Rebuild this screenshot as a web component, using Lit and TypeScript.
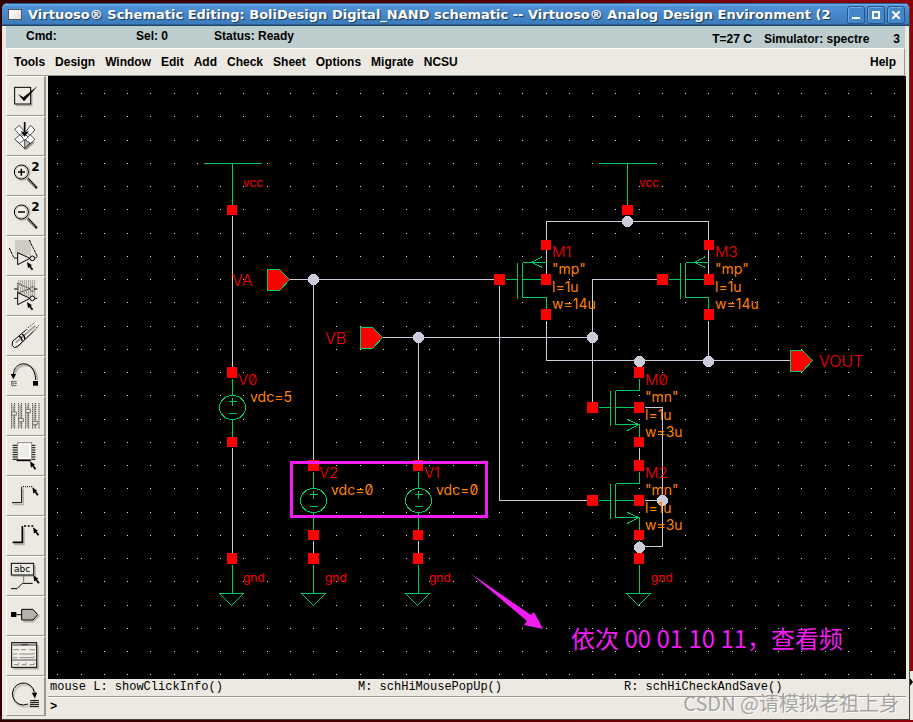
import { LitElement, html, svg, css } from "lit";
import { customElement } from "lit/decorators.js";

/* Icons are drawn on a 117 x 120 board, three units to a pixel. */
const cursor = (x: number, y: number) =>
  svg`<path fill="#000" transform="translate(${x} ${y})" d="M0 0L15 10L11 12L19 22L14 25L7 15L3 19Z"/>`;

const lens = (sign: unknown) => svg`
  <path d="M84 70L112 98" stroke="#b5b2ab" stroke-width="9"/>
  <path d="M80 64L110 96" stroke="#000" stroke-width="6"/>
  <path d="M82 68L106 93" stroke="#fff" stroke-width="2"/>
  <circle cx="67" cy="50" r="22" fill="none" stroke="#b5b2ab" stroke-width="5"/>
  <circle cx="64" cy="48" r="21" fill="#f4f2ec" stroke="#000" stroke-width="3"/>
  <circle cx="64" cy="48" r="17" fill="none" stroke="#c6c3bc" stroke-width="3"/>
  ${sign}
  <text x="94" y="44" font-size="36" font-weight="700">2</text>`;

const range = (n: number) => Array.from({ length: n }, (_, i) => i);

const icons: { name: string; art: unknown }[] = [
  { name: "Check and save", art: svg`
    <path d="M48 88H95V40" fill="none" stroke="#b5b2ab" stroke-width="5"/>
    <rect x="44" y="34" width="48" height="50" fill="none" stroke="#000" stroke-width="3"/>
    <path d="M54 54L70 64L113 30L72 76Z"/>` },
  { name: "Save", art: svg`
    <path d="M52 78L78 103L104 80L84 70Z" fill="#9a978f"/>
    <g fill="#fff" stroke="#000" stroke-width="2">
      <path d="M50 74L74 98L98 74L74 54Z"/><path d="M74 98V72L98 72Z" fill="#c2bfb7"/>
      <path d="M44 40L58 28L73 46L60 58Z"/><path d="M78 46L92 28L105 42L90 58Z"/>
      <path d="M44 70L60 56L73 72L58 82Z"/><path d="M76 72L90 56L105 70L92 82Z"/>
    </g>
    <path d="M74 18V50" stroke="#000" stroke-width="5"/><path d="M61 44L74 62L87 44L74 50Z"/>` },
  { name: "Zoom in by 2", art: lens(svg`<path d="M54 48H75M64 38V59" stroke="#000" stroke-width="5"/>`) },
  { name: "Zoom out by 2", art: lens(svg`<path d="M54 48H75" stroke="#000" stroke-width="5"/>`) },
  { name: "Stretch", art: svg`
    <g stroke="#b0ada6" stroke-width="3">${range(8).map((i) => svg`<path d="M${48 + i * 6} 12V${56 + (i % 2) * 4}"/>`)}</g>
    <path d="M28 36L42 66H53M88 12L112 62L106 66" fill="none" stroke="#000" stroke-width="3" stroke-dasharray="9 2"/>
    <path d="M53 50V86L90 67Z" fill="#ece9e2" stroke="#000" stroke-width="3"/>
    <circle cx="97" cy="67" r="7" fill="#ece9e2" stroke="#000" stroke-width="3"/>${cursor(81, 78)}` },
  { name: "Copy", art: svg`
    <g stroke="#a5a29b" stroke-width="3">${range(9).map((i) => svg`<path d="M${56 + i * 6} 12V62"/>`)}</g>
    <path d="M53 22V52L90 38Z" fill="none" stroke="#000" stroke-width="3" stroke-dasharray="3 3"/>
    <circle cx="97" cy="39" r="7" fill="none" stroke="#000" stroke-width="3" stroke-dasharray="3 3"/>
    <path d="M42 39H53M42 67H53M105 39H112M105 67H112" stroke="#000" stroke-width="3"/>
    <path d="M53 50V86L90 67Z" fill="#ece9e2" stroke="#000" stroke-width="3"/>
    <circle cx="97" cy="67" r="7" fill="#ece9e2" stroke="#000" stroke-width="3"/>${cursor(81, 78)}` },
  { name: "Delete", art: svg`
    <path d="M50 98L116 34L104 34L44 92Z" fill="#b5b2ab"/>
    <path d="M36 86L38 76L98 24L110 20L116 26L108 38L54 90L44 95Z" fill="#f4f2ec"/>
    <path d="M80 40L38 76L36 88L44 95L54 90L100 46" fill="none" stroke="#000" stroke-width="3"/>
    <path d="M47 80L106 29" stroke="#a5a29b" stroke-width="6"/>
    <path d="M57 62Q66 62 66 76M65 55Q74 56 74 69" fill="none" stroke="#000" stroke-width="4"/>
    <path d="M100 46L116 28M84 36L104 20" stroke="#000" stroke-width="3" stroke-dasharray="3 4"/>` },
  { name: "Undo", art: svg`
    <path d="M45 58C47 18 110 12 112 74" fill="none" stroke="#b5b2ab" stroke-width="6"/>
    <path d="M40 56C42 12 105 8 107 72" fill="none" stroke="#000" stroke-width="3"/>
    <path d="M32 54H48L40 70Z"/><rect x="99" y="75" width="15" height="14"/>
    <rect x="35" y="76" width="13" height="13" fill="none" stroke="#000" stroke-width="3" stroke-dasharray="3 3"/>
    <path d="M41 78V88M37 82H46" stroke="#000" stroke-width="2" stroke-dasharray="2 2"/>` },
  { name: "Properties", art: svg`
    <g stroke="#000" stroke-width="3" stroke-dasharray="3 3">${[35, 44, 56, 65, 77, 86, 98, 107, 117].map((x) => svg`<path d="M${x} 22V98"/>`)}</g>
    <g stroke="#aaa79f" stroke-width="4">${[40, 61, 82, 103].map((x) => svg`<path d="M${x} 26V94"/>`)}</g>
    <g fill="#f4f2ec" stroke="#77746d" stroke-width="3">
      <rect x="35" y="48" width="14" height="9"/><rect x="56" y="68" width="14" height="9"/>
      <rect x="77" y="40" width="14" height="9"/><rect x="98" y="76" width="14" height="9"/>
    </g>` },
  { name: "Instance", art: svg`
    <g stroke="#000" stroke-width="3">${range(7).map((i) => svg`<path d="M38 ${28 + i * 7}H106"/>`)}</g>
    <rect x="53" y="20" width="42" height="52" fill="#fff" stroke="#8c8982" stroke-width="3"/>
    <rect x="60" y="27" width="28" height="38" fill="#efede7"/>
    <path d="M50 73H92" stroke="#000" stroke-width="5"/>${cursor(90, 76)}` },
  { name: "Wire (narrow)", art: svg`
    <path d="M40 86H70V38" fill="none" stroke="#b5b2ab" stroke-width="4"/>
    <path d="M36 80H65V32" fill="none" stroke="#000" stroke-width="3"/>
    <path d="M69 32H100" stroke="#000" stroke-width="3" stroke-dasharray="3 3"/>${cursor(97, 34)}` },
  { name: "Wire (wide)", art: svg`
    <path d="M42 85H72V38" fill="none" stroke="#b5b2ab" stroke-width="5"/>
    <path d="M38 79H67V30" fill="none" stroke="#000" stroke-width="5"/>
    <path d="M72 30H102" stroke="#000" stroke-width="5" stroke-dasharray="6 5"/>${cursor(99, 34)}` },
  { name: "Wire name", art: svg`
    <path d="M38 60H105V28" fill="none" stroke="#b5b2ab" stroke-width="5"/>
    <rect x="34" y="22" width="67" height="35" fill="#ece9e2" stroke="#000" stroke-width="3"/>
    <text x="42" y="48" font-size="27">abc</text>
    <path d="M33 98H51L67 82H98" fill="none" stroke="#000" stroke-width="3"/>
    <path d="M71 62V80" stroke="#000" stroke-width="3" stroke-dasharray="3 3"/>${cursor(100, 58)}` },
  { name: "Pin", art: svg`
    <path d="M70 77H100L118 58" fill="none" stroke="#b5b2ab" stroke-width="5"/>
    <rect x="33" y="48" width="16" height="15"/><path d="M49 56H65" stroke="#000" stroke-width="3"/>
    <path d="M65 40H99L113 56L99 72H65Z" fill="#b5b2ab" stroke="#000" stroke-width="3"/>` },
  { name: "Command options", art: svg`
    <path d="M40 98H114V26" fill="none" stroke="#b5b2ab" stroke-width="5"/>
    <rect x="35" y="20" width="75" height="74" fill="#f1efe9" stroke="#000" stroke-width="3"/>
    <rect x="37" y="22" width="71" height="8" fill="#96938c"/>
    <path d="M64 26H84M37 72H108" stroke="#000" stroke-width="2"/>
    <g fill="none" stroke="#8c8982" stroke-width="3">
      <path d="M41 41H57M63 41H78M88 41H105M39 54H52M58 54H102V50M39 65H52M58 65H102V61"/>
      <path d="M42 86H56V80M65 86H78V80M88 86H102V80"/>
    </g>` },
  { name: "Repeat", art: svg`
    <circle cx="74" cy="60" r="33" fill="none" stroke="#c6c3bc" stroke-width="5"/>
    <path d="M103 50A33 33 0 1 0 84 84" fill="none" stroke="#000" stroke-width="3"/>
    <path d="M95 50H112L104 66Z"/>
    <path d="M90 74H117M90 80H117M90 86H117M90 92H117" stroke="#000" stroke-width="3"/>` },
];

/* Grid dots of the sheet, one every 23.25 units, snapped to a pixel. */
const dots = range(56 * 90)
  .map((i) => `M${Math.floor(57.75 + (i % 90) * 23.25)} ${Math.floor(93.5 + Math.floor(i / 90) * 23.25)}h1v1h-1z`)
  .join("");

const pads = [
  [227, 205, 10, 10], [227, 367, 10, 11], [227, 437, 10, 10], [227, 553, 10, 11],
  [308, 460, 11, 11], [308, 530, 11, 10], [308, 553, 11, 11],
  [413, 460, 10, 11], [413, 530, 10, 10], [413, 553, 10, 11],
  [622, 205, 11, 10], [541, 240, 10, 10], [541, 274, 10, 11], [541, 309, 10, 11], [494, 274, 11, 11],
  [704, 240, 10, 10], [704, 274, 10, 11], [704, 309, 10, 11], [657, 274, 11, 11],
  [634, 367, 10, 11], [634, 402, 10, 11], [634, 437, 10, 10], [587, 402, 11, 11],
  [634, 460, 10, 11], [634, 495, 10, 11], [634, 530, 10, 10], [587, 495, 11, 11], [634, 553, 10, 11],
];
const joints = [[313, 279], [418, 337], [627, 221], [592, 337], [639, 361], [708, 361], [662, 500], [639, 547]];
const wires =
  "M232 215V367M232 447V553M289 279H494M313 279V460M313 540V553M382 337H592M418 337V460M418 540V553" +
  "M627 215V221M546 274V221H708V274M546 320V360H790M708 320V360M657 279H592V402M499 285V500H587" +
  "M639 360V367M639 447V460M639 540V553M644 407H662V546H639M644 500H662";

const supply = (x: number) => `M${x - 29} 163H${x + 29}M${x} 163V205`;
const ground = (x: number, tip: number) => `M${x} 564V593M${tip - 12} 593H${tip + 12}L${tip} 605Z`;
const source = (x: number, y: number) =>
  `M${x} ${y - 29}V${y - 12}M${x} ${y + 12}V${y + 30}M${x - 4} ${y - 6}H${x + 4}M${x} ${y - 10}V${y - 2}M${x - 4} ${y + 6}H${x + 4}`;
const pmos = (g: number, d: number) =>
  `M${g - 12} 279H${g}M${g} 262V298M${g + 5} 262V297M${g + 5} 262H${d}M${g + 5} 279H${d}M${g + 5} 297H${d}V309M${g + 25} 256L${g + 14} 262L${g + 25} 267`;
const nmos = (y: number) =>
  `M598 ${y}H610M610 ${y - 17}V${y + 18}M615 ${y - 17}V${y + 17}M639 ${y - 29}V${y - 17}H615M615 ${y}H634M615 ${y + 17}H639V${y + 30}M627 ${y + 12}L638 ${y + 17}L627 ${y + 23}`;
const symbols = [
  supply(232), supply(627), ground(232, 231), ground(313, 313), ground(418, 417), ground(639, 638),
  source(232, 407), source(313, 500), source(418, 500), pmos(517, 546), pmos(680, 708), nmos(407), nmos(500),
].join("");
const port = (x: number, y: number) => `M${x} ${y - 10}H${x + 12}L${x + 22} ${y}L${x + 12} ${y + 11}H${x}Z`;

type Label = [string, number, number, string];
const device = (name: string, model: string, w: string, x: number, y: number): Label[] => [
  [name, x, y, "net mid"], [model, x, y + 17, "val"], ["l=1u", x, y + 35, "val"], [w, x, y + 52, "val"],
];
const labels: Label[] = [
  ["vcc", 243, 187, "net small"], ["vcc", 639, 187, "net small"],
  ["gnd", 243, 582, "net small"], ["gnd", 325, 582, "net small"], ["gnd", 429, 582, "net small"], ["gnd", 651, 582, "net small"],
  ["VA", 232, 286, "net big"], ["VB", 325, 344, "net big"], ["VOUT", 819, 367, "net big"],
  ["V0", 238, 385, "net mid"], ["V2", 319, 478, "net mid"], ["V1", 424, 478, "net mid"],
  ["vdc=5", 250, 402, "val"], ["vdc=0", 331, 495, "val"], ["vdc=0", 436, 495, "val"],
  ...device("M1", '"mp"', "w=14u", 552, 257), ...device("M3", '"mp"', "w=14u", 715, 257),
  ...device("M0", '"mn"', "w=3u", 645, 385), ...device("M2", '"mn"', "w=3u", 645, 478),
];

@customElement("schematic-canvas")
export class SchematicCanvas extends LitElement {
  static styles = css`
    :host { display: block; background: #000; overflow: hidden; position: relative; min-height: 400px; }
    .sheet { position: absolute; inset: 0; width: 100%; height: 100%; }
    .crisp { shape-rendering: crispEdges; }
    .dots { fill: #d6d6e4; }
    .wire { fill: none; stroke: #ccccda; }
    .joint { fill: #ccccda; }
    .symbol { fill: none; stroke: #00cc66; }
    .port { fill: #f00; stroke: #00cc66; }
    .pad { fill: #f00; }
    .mark { fill: none; stroke: #f31cf3; stroke-width: 3px; }
    .arrow { fill: #f31cf3; }
    .label { font-family: Inter, "Liberation Sans", sans-serif; font-weight: 400; font-feature-settings: "zero" 1; }
    .net { fill: #f00; }
    .val { fill: #ff8000; font-size: 14px; }
    .small { font-size: 12px; }
    .mid { font-size: 15px; font-weight: 300; }
    .big { font-size: 16px; font-weight: 300; }
    .note { fill: #f31cf3; font: 24px "Noto Sans CJK SC", sans-serif; }
  `;
  render() {
    return html`<svg class="sheet" role="img" aria-label="NAND gate schematic">
      <g transform="translate(-48 -76)"><path class="dots crisp" d=${dots} /></g>
      <g transform="translate(-47.5 -75.5)">
        <path class="wire crisp" d=${wires} />
        ${joints.map(([x, y]) => svg`<circle class="joint crisp" cx=${x} cy=${y} r="5.5"/>`)}
        <path class="symbol crisp" d=${symbols} />
        ${[[232, 407], [313, 500], [418, 500]].map(([x, y]) => svg`<ellipse class="symbol crisp" cx=${x} cy=${y} rx="13" ry="12"/>`)}
        ${[[267, 279], [360, 337], [790, 360]].map(([x, y]) => svg`<path class="port crisp" d=${port(x, y)} />`)}
      </g>
      <g transform="translate(-48 -76)">
        ${pads.map(([x, y, w, h]) => svg`<rect class="pad" x=${x} y=${y} width=${w} height=${h} />`)}
        ${labels.map(([t, x, y, c]) => svg`<text class="label ${c}" x=${x} y=${y}>${t}</text>`)}
        <path class="arrow" d="M470 573L531 615L534 612L543 629L524 625L527 621Z" />
        <text class="note" x="571" y="648">依次 00 01 10 11，查看频</text>
      </g>
      <g transform="translate(-47.5 -75.5)"><rect class="mark" x="291" y="462" width="195" height="54" /></g>
    </svg>`;
  }
}

@customElement("app-root")
export class AppRoot extends LitElement {
  static styles = css`
    :host {
      display: grid; grid-template-columns: minmax(0, 1fr) 3px; box-sizing: border-box; min-height: 100vh;
      padding: 3px 0 2px 2px; position: relative; color: #000;
      font-family: "Liberation Sans", sans-serif; background: linear-gradient(90deg, #300000, #4a0000 45%, #900008);
    }
    button { font: inherit; color: inherit; padding: 0; border: 0; background: none; }
    .window {
      display: grid; grid-template-rows: 23px 22px 28px minmax(0, 1fr); min-width: 0; background: #ece9e2;
      border-right: 1px solid #4a4540; border-bottom: 1px solid #4a4540; border-radius: 6px 6px 0 0; overflow: hidden;
    }
    .title {
      display: flex; align-items: center; gap: 2px; padding: 0 4px 0 6px; min-width: 0;
      background: linear-gradient(#2c5d92 0 1px, #6aa9e6 1px 2px, #4f91d6 3px, #3c7cbc 21px, #1f4266 22px);
    }
    .sys { width: 14px; height: 11px; border: 1px solid #555; background: linear-gradient(135deg, #fff, #ddd); box-sizing: border-box; }
    .caption {
      flex: 1; margin: 0 0 0 4px; min-width: 0; overflow: hidden; white-space: nowrap; color: #fff;
      font: 700 13px/20px "DejaVu Sans", sans-serif; text-shadow: 1px 1px 1px #1c3550;
    }
    .ctl {
      width: 18px; height: 18px; border: 1px solid #24548a; border-radius: 3px; background: #4486c8;
      display: grid; place-items: center; box-shadow: inset 1px 1px 0 #6ea9e2;
    }
    .glyph { width: 10px; height: 10px; display: block; }
    .status {
      display: grid; grid-template-columns: 110px 78px 1fr auto auto auto; margin: 0 4px; padding: 0 5px 0 20px;
      background: #bdcccc; font: 700 12px/20px "Liberation Sans", sans-serif; white-space: nowrap;
    }
    .low { padding-top: 3px; }
    .temp { margin-right: 12px; }
    .sim { margin-right: 24px; }
    .menu {
      display: flex; gap: 10px; align-items: center; margin: 0 4px; border: 1px solid; box-sizing: border-box;
      border-color: #fff #9a978f #9a978f #fff; font: 700 12px/20px "Liberation Sans", sans-serif; padding: 0 8px 0 7px;
    }
    .help { margin-left: auto; }
    .work { display: grid; grid-template-columns: 40px minmax(0, 1fr); column-gap: 2px; padding: 0 3px 3px 4px; }
    .tools { display: grid; grid-auto-rows: 40px; align-content: start; }
    .tool { border: 1px solid; border-color: #fff #9a978f #9a978f #fff; border-right-width: 2px; display: block; overflow: hidden; }
    .icon { display: block; width: 39px; height: 40px; margin: -1px 0 0; font-family: "DejaVu Sans", sans-serif; }
    .main { display: grid; grid-template-rows: minmax(0, 1fr) 18px 19px; min-width: 0; }
    .mouse {
      display: grid; grid-template-columns: 308fr 266fr 282fr; padding-left: 2px; border-bottom: 1px solid #9a978f;
      font: 12px/17px "Liberation Mono", monospace; white-space: pre; box-sizing: border-box;
    }
    .prompt { display: flex; padding-left: 2px; border-top: 1px solid #fff; font: 700 12px/18px "Liberation Mono", monospace; box-sizing: border-box; }
    .entry { flex: 1; border: 0; outline: 0; background: none; font: inherit; min-width: 0; padding: 0 4px; }
    .behind { display: flex; flex-direction: column; justify-content: flex-end; }
    .sliver { height: 49px; background: #ece9e2; display: flex; align-items: flex-start; padding-top: 7px; box-sizing: border-box; }
    .nub { width: 3px; height: 8px; display: block; }
    .brand {
      position: absolute; right: 14px; bottom: 5px; font: 20px/28px "Noto Sans CJK SC", sans-serif;
      color: rgba(150, 150, 150, 0.85); text-shadow: 1px 1px 0 rgba(255, 255, 255, 0.7); white-space: nowrap;
    }
  `;
  render() {
    const menus = ["Tools", "Design", "Window", "Edit", "Add", "Check", "Sheet", "Options", "Migrate", "NCSU"];
    return html`
      <div class="window">
        <header class="title">
          <button class="sys" aria-label="Window menu"></button>
          <h1 class="caption">Virtuoso® Schematic Editing: BoliDesign Digital_NAND schematic -- Virtuoso® Analog Design Environment (2</h1>
          <button class="ctl" aria-label="Minimize"><svg class="glyph" viewBox="0 0 10 10"><path d="M1 8H9" stroke="#fff" stroke-width="2"/></svg></button>
          <button class="ctl" aria-label="Maximize"><svg class="glyph" viewBox="0 0 10 10"><path d="M2 2H8V8H2Z" fill="none" stroke="#fff" stroke-width="2"/></svg></button>
          <button class="ctl" aria-label="Close"><svg class="glyph" viewBox="0 0 10 10"><path d="M2 2L8 8M8 2L2 8" stroke="#fff" stroke-width="2" stroke-linecap="square"/></svg></button>
        </header>
        <div class="status">
          <span>Cmd:</span><span>Sel: 0</span><span>Status: Ready</span>
          <span class="low temp">T=27 C</span><span class="low sim">Simulator: spectre</span><span class="low">3</span>
        </div>
        <nav class="menu">
          ${menus.map((m) => html`<button>${m}</button>`)}
          <button class="help">Help</button>
        </nav>
        <div class="work">
          <div class="tools" role="toolbar">
            ${icons.map((i) => html`<button class="tool" aria-label=${i.name}><svg class="icon" viewBox="21 0 117 120">${i.art}</svg></button>`)}
          </div>
          <div class="main">
            <schematic-canvas></schematic-canvas>
            <div class="mouse"><span>mouse L: showClickInfo()</span><span>M: schHiMousePopUp()</span><span>R: schHiCheckAndSave()</span></div>
            <div class="prompt"><label for="cmd">&gt;</label><input id="cmd" class="entry" type="text" /></div>
          </div>
        </div>
      </div>
      <div class="behind"><div class="sliver"><svg class="nub" viewBox="0 0 3 8"><path d="M0 0L3 4L0 8Z"/></svg></div></div>
      <div class="brand">CSDN @请模拟老祖上身</div>
    `;
  }
}
